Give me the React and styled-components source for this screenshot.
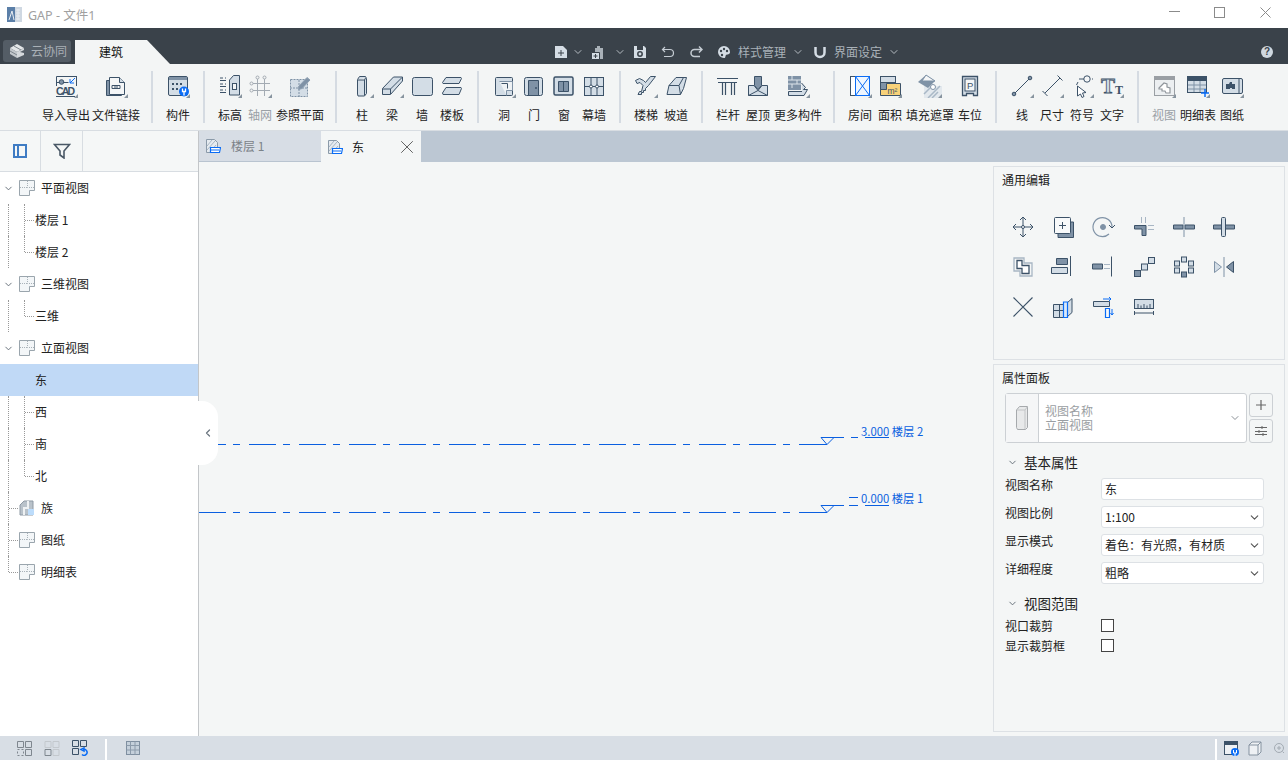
import styled, { createGlobalStyle } from 'styled-components';
import { ChevronDown, ChevronLeft, X as CloseIcon } from 'lucide-react';

const D = '#3c5268';
const M = '#7f92a6';
const L = '#d3dde6';
const B = '#0a6cf5';
const G = '#a3abb3';

const GlobalStyle = createGlobalStyle`
  * { box-sizing: border-box; }
  html, body { margin: 0; padding: 0; height: 100%; }
  body {
    background: #f4f6f6;
    color: #222;
    font-family: "Noto Sans CJK SC", "Noto Sans", sans-serif;
    font-size: 12px;
    overflow: hidden;
  }
`;

const Page = styled.div`
  width: 1288px;
  height: 760px;
  display: flex;
  flex-direction: column;
`;

const TitleBar = styled.div`
  height: 28px;
  background: #fff;
  display: flex;
  align-items: center;
  padding-left: 7px;
`;

const AppTitle = styled.span`
  margin-left: 6px;
  color: #a0a0a0;
  font-size: 12.5px;
  font-family: "Noto Sans", "Noto Sans CJK SC", sans-serif;
`;

const WindowButtons = styled.div`
  margin-left: auto;
  display: flex;
`;

const WindowButton = styled.div`
  width: 45.5px;
  height: 28px;
  display: flex;
  align-items: center;
  justify-content: center;
  margin-top: -4px;
`;

const DarkBar = styled.div`
  height: 36px;
  background: #3a424a;
  display: flex;
  align-items: flex-end;
  padding-left: 3px;
`;

const CloudButton = styled.div`
  width: 68px;
  height: 22px;
  margin-bottom: 2px;
  background: #545d66;
  border-radius: 3px;
  color: #a9b0b6;
  display: flex;
  align-items: center;
  gap: 6px;
  padding-left: 6px;
  line-height: 22px;
`;

const RibbonTab = styled.div`
  width: 95px;
  height: 24px;
  margin-left: 4px;
  padding-left: 24px;
  background: #f3f5f5;
  clip-path: polygon(0 0, 72px 0, 100% 100%, 0 100%);
  line-height: 24px;
  color: #111;
`;

const QuickBar = styled.div`
  margin-left: 384px;
  height: 24px;
  display: flex;
  align-items: center;
  color: #a9b1b8;
`;

const QuickLabel = styled.span`
  margin-left: ${(p) => p.$left}px;
  line-height: 24px;
`;

const QuickIcon = styled.svg`
  margin-left: ${(p) => p.$left || 0}px;
  flex: none;
  display: block;
`;

const QuickChevron = styled(ChevronDown)`
  margin-left: ${(p) => p.$left}px;
  flex: none;
  color: #b4bbc1;
`;

const Help = styled.div`
  margin-left: auto;
  margin-right: 15px;
  margin-bottom: 6px;
  width: 12px;
  height: 12px;
  border-radius: 50%;
  background: #cfd8e0;
  color: #3a424a;
  font: bold 10px/12px "Liberation Sans", sans-serif;
  text-align: center;
`;

const Ribbon = styled.div`
  height: 67px;
  background: #f3f5f5;
  border-bottom: 1px solid #d8dde2;
  display: flex;
  align-items: flex-start;
  padding-left: 29px;
`;

const RibbonGroup = styled.div`
  display: flex;
  padding: 0 10px 0 ${(p) => p.$left}px;
`;

const RibbonSep = styled.div`
  width: 2px;
  height: 52px;
  margin-top: 7px;
  background: #d5dbe2;
  flex: none;
`;

const ToolItem = styled.div`
  width: ${(p) => p.$w}px;
  display: flex;
  flex-direction: column;
  align-items: center;
  padding-top: 10px;
  color: ${(p) => (p.$dim ? '#9aa0a6' : '#222')};
`;

const ToolIcon = styled.svg`
  display: block;
  width: 24px;
  height: 24px;
`;

const ToolLabel = styled.span`
  margin-top: 9px;
  line-height: 16px;
  white-space: nowrap;
`;

const Body = styled.div`
  flex: 1;
  display: flex;
  min-height: 0;
`;

const Sidebar = styled.aside`
  width: 199px;
  flex: none;
  background: #fff;
  border-right: 1px solid #c3c6c9;
  position: relative;
  display: flex;
  flex-direction: column;
`;

const SideHeader = styled.div`
  height: 41px;
  background: #f5f7f7;
  border-bottom: 1px solid #d8dde2;
  display: flex;
`;

const SideTool = styled.div`
  width: ${(p) => p.$w}px;
  border-right: 1px solid #d8dde2;
  display: flex;
  align-items: center;
  justify-content: center;
`;

const TreeRow = styled.div`
  height: 32px;
  position: relative;
  display: flex;
  align-items: center;
  padding-left: ${(p) => (p.$child ? 35 : 19)}px;
  gap: 6px;
  background: ${(p) => (p.$active ? '#c0d9f6' : 'transparent')};
  color: #222;
  line-height: 32px;
`;

const Twist = styled(ChevronDown)`
  position: absolute;
  left: 3px;
  top: 11px;
  color: #5f6973;
`;

const Trunk = styled.span`
  position: absolute;
  left: 8px;
  top: 0;
  bottom: 0;
  border-left: 1px dotted #999;
`;

const Branch = styled.span`
  position: absolute;
  left: ${(p) => p.$x}px;
  top: 0;
  bottom: ${(p) => (p.$last ? '50%' : '0')};
  border-left: 1px dotted #999;
  &::after {
    content: '';
    position: absolute;
    left: 0;
    top: ${(p) => (p.$last ? '100%' : '50%')};
    width: ${(p) => p.$w}px;
    border-top: 1px dotted #999;
  }
`;

const CollapseHandle = styled.div`
  position: absolute;
  left: 198px;
  top: 270px;
  width: 20px;
  height: 64px;
  background: #fff;
  border-radius: 0 16px 16px 0;
  display: flex;
  align-items: center;
  justify-content: center;
  color: #6c7680;
  z-index: 2;
`;

const Main = styled.main`
  flex: 1;
  min-width: 0;
  display: flex;
  flex-direction: column;
`;

const TabBar = styled.div`
  height: 31px;
  background: #bcc7d3;
  display: flex;
  flex: none;
`;

const ViewTab = styled.div`
  width: ${(p) => p.$w}px;
  background: ${(p) => (p.$active ? '#f4f6f6' : '#d7dde5')};
  border-bottom: ${(p) => (p.$active ? 'none' : '1px solid #b9c4d0')};
  color: ${(p) => (p.$active ? '#222' : '#7b8288')};
  display: flex;
  align-items: center;
  padding-left: 6px;
  line-height: 30px;
`;

const ViewTabName = styled.span`
  margin-left: ${(p) => p.$left}px;
`;

const TabClose = styled(CloseIcon)`
  margin-left: auto;
  margin-right: 3px;
  color: #555;
`;

const Workspace = styled.div`
  flex: 1;
  display: flex;
  min-height: 0;
  background: #f4f6f6;
`;

const Canvas = styled.div`
  flex: 1;
  min-width: 0;
`;

const CanvasSvg = styled.svg`
  display: block;
  width: 100%;
  height: 100%;
`;

const RightColumn = styled.div`
  width: 295px;
  flex: none;
  padding: 4px 3px 4px 0;
  display: flex;
  flex-direction: column;
  gap: 4px;
`;

const Panel = styled.section`
  border: 1px solid #dde1e5;
  background: #f4f6f6;
  padding: 4px 8px;
  ${(p) => (p.$fill ? 'flex: 1;' : `height: ${p.$h}px;`)}
`;

const PanelTitle = styled.div`
  line-height: 18px;
  color: #222;
`;

const EditGrid = styled.div`
  display: grid;
  grid-template-columns: repeat(6, 40.2px);
  grid-auto-rows: 40px;
  margin: 18px 0 0 1px;
`;

const EditCell = styled.div`
  display: flex;
  align-items: center;
  justify-content: center;
`;

const TypeRow = styled.div`
  display: flex;
  gap: 2px;
  margin: 6px 0 0 3px;
`;

const TypeBox = styled.div`
  width: 242px;
  height: 50px;
  background: #fff;
  border: 1px solid #ccd0d4;
  border-radius: 3px;
  display: flex;
  align-items: center;
`;

const TypeThumb = styled.div`
  width: 33px;
  height: 100%;
  background: #f5f6f7;
  border-right: 1px solid #ccd0d4;
  display: flex;
  align-items: center;
  justify-content: center;
`;

const TypeText = styled.div`
  flex: 1;
  padding-left: 6px;
  color: #9a9ea2;
  line-height: 14px;
`;

const TypeChevron = styled(ChevronDown)`
  margin-right: 5px;
  color: #8b9197;
`;

const SideButtons = styled.div`
  display: flex;
  flex-direction: column;
  gap: 2px;
`;

const SquareButton = styled.div`
  width: 24px;
  height: 24px;
  border: 1px solid #ccd0d4;
  border-radius: 3px;
  display: flex;
  align-items: center;
  justify-content: center;
  color: #666;
  background: #f4f6f6;
`;

const SectionHead = styled.div`
  display: flex;
  align-items: center;
  gap: 6px;
  margin: ${(p) => p.$top}px 0 0 5px;
  font-size: 13.5px;
  line-height: 20px;
  color: #222;
`;

const SectionChevron = styled(ChevronDown)`
  color: #5f6973;
`;

const PropRows = styled.div`
  margin: 6px 0 0 3px;
  display: flex;
  flex-direction: column;
  gap: 6px;
`;

const PropRow = styled.div`
  display: flex;
  height: 22px;
`;

const PropLabel = styled.span`
  width: 96px;
  line-height: 14px;
  color: #222;
`;

const PropField = styled.div`
  width: 163px;
  height: 22px;
  padding-left: 3px;
  background: #fff;
  border: 1px solid #dde1e5;
  border-radius: 3px;
  display: flex;
  align-items: center;
  justify-content: space-between;
  line-height: 20px;
  color: #222;
`;

const FieldChevron = styled(ChevronDown)`
  margin-right: 2px;
  color: #555;
`;

const CheckRows = styled.div`
  margin: 6px 0 0 3px;
  display: flex;
  flex-direction: column;
  gap: 7px;
`;

const CheckRow = styled.div`
  display: flex;
  align-items: center;
  height: 13px;
  line-height: 13px;
`;

const CheckBox = styled.span`
  width: 13px;
  height: 13px;
  background: #fff;
  border: 1px solid #444;
`;

const StatusBar = styled.footer`
  height: 24px;
  flex: none;
  background: #d8dee5;
  display: flex;
  align-items: center;
`;

const StatusGroup = styled.div`
  display: flex;
  align-items: center;
  gap: ${(p) => p.$gap || 12}px;
  padding: 0 ${(p) => p.$right}px 0 ${(p) => p.$left}px;
`;

const StatusSep = styled.div`
  width: 2px;
  align-self: flex-end;
  height: 21px;
  background: #fff;
  margin-left: ${(p) => (p.$auto ? 'auto' : 0)};
`;

const mark = <path d="M24 20v4h-4z" fill="#87949f" />;

const icons = {
  cad: (
    <>
      <path d="M2.500 12V2.500H23M2.500 8.500h12M22.500 2.500V12" fill="none" stroke={D} />
      <circle cx="7.500" cy="8" r="2.300" fill={M} stroke={D} />
      <path d="M21 4l-5 5m0-4v4h4" fill="none" stroke={B} />
      <text x="2" y="21" fontSize="10.500" fontWeight="700" fontFamily="Liberation Sans" fill={D} textLength="19">CAD</text>
      <path d="M2 22.500h19" stroke={D} />
    </>
  ),
  file: (
    <>
      <path d="M5.500 6.500h-3v15h15v-1" fill={M} stroke={D} />
      <path d="M5.500 3.500h10l5 5v12h-15z" fill="#f4f6f7" stroke={D} />
      <path d="M15.500 3.500v5h5" fill={L} stroke={D} />
      <path d="M8 11.500h8v3H8z" fill="none" stroke={D} />
      <path d="M10 13h4" stroke={D} />
    </>
  ),
  part: (
    <>
      <rect x="2.500" y="2.500" width="19" height="19" rx="1.500" fill={L} stroke={D} />
      <path d="M3 3h18v3H3z" fill={M} />
      <path d="M6 9h2v2H6zm4 0h2v2h-2zm4 0h2v2h-2zM6 14h2v2H6zm4 0h2v2h-2z" fill={D} />
      <circle cx="18" cy="17.500" r="5" fill={B} />
      <path d="M16.500 14.500v3h3v-3m-1.500 3v4" stroke="#fff" fill="none" strokeWidth="1.300" />
    </>
  ),
  level: (
    <>
      <path d="M2 4h3m2 0h1M2 6.500h6M2 10h3m2 0h1M2 12.500h6M2 16h3m2 0h1M2 18.500h6" stroke={D} />
      <path d="M11.500 6l4-4.500h6V21h-10z" fill={L} stroke={D} />
      <rect x="14.500" y="9.500" width="4" height="6" fill="#f4f6f7" stroke={D} />
    </>
  ),
  axis: (
    <g stroke={G} fill="none">
      <path d="M9.500 5v17M16.500 5v17M5 9.500h17M5 16.500h17" />
      <circle cx="9.500" cy="3.500" r="1.500" />
      <circle cx="16.500" cy="3.500" r="1.500" />
      <circle cx="3.500" cy="9.500" r="1.500" />
      <circle cx="3.500" cy="16.500" r="1.500" />
    </g>
  ),
  plane: (
    <>
      <rect x="2.500" y="5.500" width="17" height="17" fill={L} stroke={M} strokeDasharray="2 1" />
      <path d="M2 14h18M11 6v17" stroke={M} strokeDasharray="2 1" />
      <path d="M11 12l8-8.500 3 2.500-8 8.500-3.500 1z" fill={M} stroke="#8ea0b2" />
    </>
  ),
  column: (
    <path d="M7.500 5.500l2-3h6l1 2v15l-2 2.500h-6.500l-.5-2zM8 6h6.500l1-2M14.500 6v15.500" fill={L} stroke={D} />
  ),
  beam: (
    <>
      <path d="M2.500 14.500l11-11.500h9v4l-12 13.500h-8z" fill={L} stroke={D} />
      <path d="M2.500 15h8l11.500-11.500M10.500 15v5" fill="none" stroke={D} />
    </>
  ),
  wall: <rect x="2.500" y="3.500" width="20" height="18" rx="2" fill={L} stroke={D} />,
  slab: (
    <>
      <path d="M6 3.500h15l.5 1-2.500 5H3l-.5-1z" fill={L} stroke={D} />
      <path d="M6 13.500h15l.5 1-2.500 6H3l-.5-1.500z" fill={L} stroke={D} />
    </>
  ),
  hole: (
    <>
      <rect x="3.500" y="3.500" width="17" height="18" rx="1" fill={L} stroke={D} />
      <path d="M7.500 7.500h13v9h-6v5" fill="#eef2f5" stroke={M} />
      <path d="M9.500 9.500h6v5" fill="none" stroke={D} />
    </>
  ),
  door: (
    <>
      <rect x="2.500" y="3.500" width="18" height="18" rx="2" fill={L} stroke={D} />
      <path d="M6.500 6.500h10v15h-10z" fill={M} stroke={D} />
      <circle cx="14" cy="14" r="1" fill={D} />
    </>
  ),
  window: (
    <>
      <rect x="2" y="3" width="19" height="18" rx="1.500" fill={L} stroke={D} strokeWidth="1.500" />
      <path d="M6.500 7.500h10v10h-10z" fill={M} stroke={D} />
      <path d="M11.500 7v11" stroke={D} />
    </>
  ),
  curtain: (
    <>
      <rect x="2.500" y="3.500" width="19" height="18" fill={L} stroke={D} />
      <path d="M9 3.500v18M15 3.500v18M2.500 12.500h19" stroke={D} />
      <circle cx="9" cy="12.500" r="1.500" fill="#fff" stroke={D} />
      <circle cx="15" cy="12.500" r="1.500" fill="#fff" stroke={D} />
    </>
  ),
  stair: (
    <path d="M1.500 6.500l4-2 4 2 2 2 5-6h5l-7 9-3 3v2h-2v2h-2v2H4l1.500-3h2l1.500-6-3-3-3 1z" fill={L} stroke={D} />
  ),
  ramp: (
    <>
      <path d="M3 20.500l2-9 7-8h10.500l-3 11-3 6z" fill={L} stroke={D} />
      <path d="M5 11.500h10l4.500-8M15 11.500l1.500 9" fill="none" stroke={D} />
    </>
  ),
  rail: (
    <path d="M1 4.500h21M2 8.500h19M6.500 8.500V21M9.500 8.500V21M15.500 8.500V21M18.500 8.500V21" fill="none" stroke={D} strokeWidth="1.200" />
  ),
  roof: (
    <>
      <path d="M2.500 21.500v-10h5.500l4 5 4-5h5.500v10z" fill={L} stroke={D} />
      <path d="M2.500 21.500l9.500-5 9.500 5" fill="none" stroke={D} />
      <path d="M8.500 2.500h7v9l-3.500 4-3.500-4z" fill={M} stroke={D} />
    </>
  ),
  more: (
    <>
      <path d="M2 2h13v14H2z" fill={M} />
      <path d="M2 6h13M2 10h13M6 2v4M11 6v4M6 10v4" stroke="#dde4ea" />
      <path d="M15.500 9l4 4.500-2 2h4L18 21.500H2.500v-4h13.500" fill={L} stroke={D} />
    </>
  ),
  room: (
    <>
      <rect x="2.500" y="2.500" width="5" height="19" fill="#fff" stroke={D} />
      <rect x="7.500" y="2.500" width="14" height="19" fill="#eef6ff" stroke={B} />
      <path d="M7.500 2.500l14 19m0-19l-14 19" stroke={B} />
    </>
  ),
  area: (
    <>
      <rect x="2.500" y="2.500" width="15" height="13" fill={M} stroke={D} />
      <rect x="2.500" y="2.500" width="15" height="6" fill={L} stroke={D} />
      <path d="M2.500 15.500h6v-6h14v12h-20z" fill="#f8d27a" stroke={D} />
      <text x="9.500" y="20" fontSize="8.500" fontFamily="Liberation Sans" fill={D}>m²</text>
    </>
  ),
  hatch: (
    <>
      <path d="M6 12h18v12H6z" fill="#e2e8ed" />
      <path d="M6 20l8-8m-4 12l12-12m-8 12l6-6" stroke="#a9b8c6" strokeWidth="1.500" />
      <path d="M0 8l8-7 9 6-7 7z" fill={M} />
      <path d="M8 1l9 6H4z" fill="#f4f6f7" stroke={M} />
      <circle cx="15" cy="13" r="2.500" fill="#fff" stroke={M} />
    </>
  ),
  parking: (
    <>
      <path d="M4.500 2.500h15v19h-4v-2h-7v2h-4z" fill={L} stroke={D} strokeWidth="1.300" />
      <rect x="7" y="5" width="10" height="12" fill="#f4f6f7" stroke={D} />
      <text x="9" y="14.500" fontSize="9.500" fontFamily="Liberation Sans" fill={D}>P</text>
    </>
  ),
  line: (
    <>
      <path d="M4 20L20 4" stroke={D} />
      <circle cx="4" cy="20" r="1.800" fill={M} stroke={D} />
      <circle cx="20" cy="4" r="1.800" fill={M} stroke={D} />
    </>
  ),
  dim: <path d="M5 19L20 4M2.500 17l5 5M17.500 1.500l5 5" fill="none" stroke={D} />,
  symbol: (
    <>
      <circle cx="17" cy="5" r="3.200" fill="#f4f6f7" stroke={D} />
      <path d="M14 5H9M22 5h1M8 8L6.500 11" stroke={D} />
      <path d="M7.500 12l8.500 6.500-3.500.5 1.500 3.500-2 1-1.500-3.500-3 2z" fill="#fff" stroke={D} />
    </>
  ),
  text: (
    <>
      <text x="1" y="19" fontSize="21" fontWeight="700" fontFamily="Liberation Serif" fill={L} stroke={D} strokeWidth=".8">T</text>
      <text x="15" y="20" fontSize="12" fontWeight="700" fontFamily="Liberation Serif" fill={D}>T</text>
    </>
  ),
  view: (
    <>
      <rect x="2.500" y="2.500" width="20" height="19" fill="#eceff1" stroke="#9a9fa4" />
      <path d="M3 3h19v3H3z" fill="#9a9fa4" />
      <path d="M7 14l5-5 3 1v3l3 1v5h-4l-1-2h-3v-2H7z" fill="#fff" stroke="#8f959b" strokeWidth="1.200" />
    </>
  ),
  schedule: (
    <>
      <rect x="1.500" y="2.500" width="19" height="16" fill={L} stroke={D} />
      <path d="M2 3h18v4H2z" fill={D} />
      <path d="M2 11h18M2 15h18M8 7v11M14 7v11" stroke={M} />
      <path d="M19 15v8M15 19h8" stroke={B} strokeWidth="1.500" />
    </>
  ),
  sheet: (
    <>
      <rect x="2.500" y="4.500" width="20" height="15" rx="1.500" fill={L} stroke={D} />
      <path d="M19 4.500v15" stroke={D} />
      <path d="M6 10h3l1-2h2v2h3v5h-3v-1h-2v1H6z" fill="#3c5268" />
    </>
  ),
};

const ribbonGroups = [
  { left: 12, items: [['导入导出', 'cad', 50, true], ['文件链接', 'file', 50, true]] },
  { left: 10, items: [['构件', 'part', 30, true]] },
  { left: 10, items: [['标高', 'level', 30, true], ['轴网', 'axis', 30, true, true], ['参照平面', 'plane', 50]] },
  { left: 10, items: [['柱', 'column', 30, true], ['梁', 'beam', 30, true], ['墙', 'wall', 30], ['楼板', 'slab', 30]] },
  { left: 10, items: [['洞', 'hole', 30, true], ['门', 'door', 30], ['窗', 'window', 30], ['幕墙', 'curtain', 30]] },
  { left: 10, items: [['楼梯', 'stair', 30, true], ['坡道', 'ramp', 30]] },
  { left: 10, items: [['栏杆', 'rail', 30], ['屋顶', 'roof', 30], ['更多构件', 'more', 50, true]] },
  { left: 10, items: [['房间', 'room', 30, true], ['面积', 'area', 30, true], ['填充遮罩', 'hatch', 50, true], ['车位', 'parking', 30]] },
  { left: 10, items: [['线', 'line', 30, true], ['尺寸', 'dim', 30, true], ['符号', 'symbol', 30, true], ['文字', 'text', 30, true]] },
  { left: 10, items: [['视图', 'view', 30, true, true], ['明细表', 'schedule', 38, true], ['图纸', 'sheet', 30, true]] },
];

const editIcons = [
  <g fill="none" stroke={D}>
    <path d="M2 12h20M12 2v20M5 9l-3 3 3 3M19 9l3 3-3 3M9 5l3-3 3 3M9 19l3 3 3-3" />
    <circle cx="12" cy="12" r="1.500" fill="#fff" />
  </g>,
  <>
    <path d="M7 21.500V7h15.500v15.500H7z" fill={M} stroke={D} />
    <rect x="3.500" y="2.500" width="16" height="16" rx="1" fill="#f7f9fa" stroke={D} />
    <path d="M11.500 7v7M8 10.500h7" stroke={D} />
  </>,
  <g fill="none" stroke={M}>
    <path d="M21 12a9.500 9.500 0 1 0-3 7" strokeWidth="1.200" />
    <circle cx="12" cy="12" r="2.500" fill={M} />
    <path d="M18 10l3 3 3-3" stroke={D} />
  </g>,
  <>
    <path d="M2.500 10.500h11.500v10h-4v-6.500H2.500z" fill={M} stroke={D} />
    <path d="M9.500 2v6M13.500 2v6M16 10.500h6M16 14.500h6" stroke="#a8b6c4" />
  </>,
  <>
    <path d="M1.500 10h9.500v4H1.500zM13 10h9.500v4H13z" fill={M} stroke={D} />
    <path d="M12 2v20" stroke={M} />
  </>,
  <>
    <path d="M1.500 10h21v4h-21z" fill={M} stroke={D} />
    <rect x="9.500" y="2.500" width="4" height="19" rx="1" fill={L} stroke={D} />
  </>,
  <>
    <path d="M3 3h10v5h8v13H9v-5H3z" fill="none" stroke="#a8b6c4" strokeWidth="1.300" />
    <path d="M6 5.500h5v5h7v8h-7v-5H6z" fill="#fff" stroke={D} strokeWidth="1.300" />
  </>,
  <>
    <path d="M5.500 3.500h11v6h-11z" fill={M} stroke={D} />
    <path d="M.5 12.500h16v6H.5z" fill={L} stroke={D} />
    <path d="M19.500 1v20" stroke={D} />
  </>,
  <>
    <path d="M1.500 9h10v5h-10z" fill={M} stroke={D} />
    <path d="M13 9.500h6M13 13.500h6" stroke="#a8b6c4" />
    <path d="M20.500 1.500v20" stroke={D} />
  </>,
  <>
    <rect x="2.500" y="15.500" width="6" height="6" fill={M} stroke={D} />
    <rect x="9.500" y="9" width="6" height="6" fill={L} stroke={D} />
    <rect x="16.500" y="2.500" width="6" height="6" fill={L} stroke={D} />
  </>,
  <>
    <rect x="9.500" y="2" width="5" height="5" fill={L} stroke={D} />
    <rect x="2.500" y="6" width="5" height="5" fill={L} stroke={D} />
    <rect x="16.500" y="6" width="5" height="5" fill={L} stroke={D} />
    <rect x="2.500" y="13" width="5" height="5" fill={L} stroke={D} />
    <rect x="16.500" y="13" width="5" height="5" fill={L} stroke={D} />
    <rect x="9.500" y="17" width="5" height="5" fill={M} stroke={D} />
  </>,
  <>
    <path d="M2.500 6.500l7 5.500-7 5.500z" fill={L} stroke={M} />
    <path d="M12 2v20" stroke={M} />
    <path d="M21.500 6.500l-7 5.500 7 5.500z" fill={M} stroke={D} />
  </>,
  <path d="M2.500 2.500l19 19M21.500 2.500l-19 19" stroke={D} strokeWidth="1.100" />,
  <>
    <path d="M16 8l5-4.500v14L16 22z" fill={L} stroke={D} />
    <path d="M2.500 9.500h14v13h-14z" fill={L} stroke={D} />
    <path d="M2.500 15.500h14M8.500 9.500v13" stroke={D} />
    <path d="M12.500 7h4v15.500h-4z" fill="#d9e9fb" stroke={B} strokeWidth="1.200" />
  </>,
  <>
    <path d="M2.500 6.500h16v5h-16z" fill={L} stroke={D} />
    <path d="M12 4h8m-2-2l2 2-2 2" fill="none" stroke={B} />
    <path d="M14.500 13.500h4v9h-4z" fill="#f7f9fa" stroke={B} strokeWidth="1.200" />
    <path d="M21 14v6m-1.500-2l1.500 2 1.500-2" fill="none" stroke={B} />
  </>,
  <>
    <rect x="2.500" y="4.500" width="19" height="9" fill={L} stroke={D} />
    <path d="M6 9v4.500M9 10.500v3M12 9v4.500M15 10.500v3M18 9v4.500" stroke={D} />
    <path d="M2.500 16v4M21.500 16v4M2.500 18h19" stroke={D} />
  </>,
];

function PageIcon() {
  return (
    <svg width="16" height="16" viewBox="0 0 16 16">
      <path d="M.5.5h15v10h-5v5H.5z" fill="#f3f6f8" stroke="#9aa5ad" />
      <path d="M8.500 1v6.500H15M1 7.500h7" fill="none" stroke="#a9b2b9" strokeDasharray="1 1" />
    </svg>
  );
}

function FamilyIcon() {
  return (
    <svg width="16" height="16" viewBox="0 0 16 16">
      <path d="M1 15V5l4-4h9v14z" fill="#b9c2ca" stroke="#8f9aa5" />
      <path d="M5 15V8h4V1" fill="none" stroke="#eef1f3" strokeWidth="2" />
      <rect x="9" y="9" width="6" height="6" fill="#bcdcfb" />
    </svg>
  );
}

function TabDocIcon() {
  return (
    <svg width="16" height="16" viewBox="0 0 16 16">
      <path d="M1.500 1.500h8l3 3v10h-11z" fill="#e6ebf0" stroke="#8b9aa9" />
      <path d="M2 8l5-6M2 12l8-9M5 14l6-7" stroke="#a9b6c3" />
      <path d="M5.500 9.500h10l-1 5h-9z" fill="#fff" stroke={B} strokeWidth="1.200" />
      <path d="M5 12h9" stroke={B} />
    </svg>
  );
}

function LevelMark({ y, textY, value, name, dashes }) {
  return (
    <g>
      <path
        d={`M199 ${y}H821`}
        stroke="#0a5fe0"
        strokeWidth="1"
        strokeDasharray="27 7 7 9"
      />
      <path
        d={`M821 ${y - 7}H844M821 ${y - 7}L827 ${y}L834 ${y - 7}M827 ${y}H821`}
        stroke="#0a5fe0"
        fill="none"
      />
      <path d={dashes} stroke="#0a5fe0" />
      <path d={`M865 ${y - 7}H889`} stroke="#0a5fe0" />
      <text x="861" y={textY} fontSize="11.300" fill="#0a5fe0" fontFamily="Noto Sans CJK SC, sans-serif">
        {value} {name}
      </text>
    </g>
  );
}

const treeRows = [
  { label: '平面视图', head: true },
  { label: '楼层 1', child: true },
  { label: '楼层 2', child: true, last: true },
  { label: '三维视图', head: true },
  { label: '三维', child: true, last: true },
  { label: '立面视图', head: true },
  { label: '东', child: true, active: true },
  { label: '西', child: true },
  { label: '南', child: true },
  { label: '北', child: true, last: true },
  { label: '族', leaf: true, family: true },
  { label: '图纸', leaf: true },
  { label: '明细表', leaf: true, last: true },
];

function TreeItem({ row }) {
  return (
    <TreeRow $child={row.child} $active={row.active}>
      {row.head && <Twist size={11} strokeWidth={2} />}
      {row.child && !row.active && <Trunk />}
      {row.child && !row.active && <Branch $x={24} $w={9} $last={row.last} />}
      {row.leaf && <Branch $x={8} $w={9} $last={row.last} />}
      {!row.child && (row.family ? <FamilyIcon /> : <PageIcon />)}
      <span>{row.label}</span>
    </TreeRow>
  );
}

function RibbonSection({ group, withSep }) {
  return (
    <>
      <RibbonGroup $left={group.left}>
        {group.items.map(([label, icon, width, hasMark, dim]) => (
          <ToolItem key={label} $w={width} $dim={dim}>
            <ToolIcon viewBox="0 0 24 24">
              {icons[icon]}
              {hasMark && mark}
            </ToolIcon>
            <ToolLabel>{label}</ToolLabel>
          </ToolItem>
        ))}
      </RibbonGroup>
      {withSep && <RibbonSep />}
    </>
  );
}

const props = [
  { label: '视图名称', value: '东' },
  { label: '视图比例', value: '1:100', select: true },
  { label: '显示模式', value: '着色：有光照，有材质', select: true },
  { label: '详细程度', value: '粗略', select: true },
];

export default function App() {
  return (
    <Page>
      <GlobalStyle />
      <TitleBar>
        <svg width="15" height="15" viewBox="0 0 15 15">
          <rect width="15" height="15" fill="#cfd8e2" />
          <path d="M0 0h8v15H0z" fill="#5b7fa8" />
          <path d="M2 13l3-9 2 9M9 3h4M9 6h4M9 9h4M9 12h4M11 2v11" stroke="#e8edf2" fill="none" />
        </svg>
        <AppTitle>GAP - 文件1</AppTitle>
        <WindowButtons>
          <WindowButton>
            <svg width="11" height="2"><path d="M0 .5h11" stroke="#8b8b8b" /></svg>
          </WindowButton>
          <WindowButton>
            <svg width="11" height="11"><rect x=".5" y=".5" width="10" height="10" fill="none" stroke="#8b8b8b" /></svg>
          </WindowButton>
          <WindowButton>
            <svg width="11" height="11"><path d="M.5.5l10 10m0-10l-10 10" stroke="#8b8b8b" /></svg>
          </WindowButton>
        </WindowButtons>
      </TitleBar>

      <DarkBar>
        <CloudButton>
          <svg width="16" height="16" viewBox="0 0 16 16">
            <path d="M1 5l7-4 7 4-7 4z" fill="#e4e7e9" />
            <path d="M1 5v6l7 4V9z" fill="#c2c7cb" />
            <path d="M15 5v2l-4 2 4 1v2l-7 3V9z" fill="#d5d9dc" />
            <path d="M1 8l7 4M5 3l7 4" stroke="#7d858c" />
          </svg>
          云协同
        </CloudButton>
        <RibbonTab>建筑</RibbonTab>
        <QuickBar>
          <QuickIcon width="14" height="14" viewBox="0 0 14 14">
            <path d="M1 1h8l4 4v8H1z" fill="#d5dde5" />
            <path d="M7 5v6M4 8h6" stroke="#3a424a" />
          </QuickIcon>
          <QuickChevron $left={4} size={12} />
          <QuickIcon $left={6} width="15" height="15" viewBox="0 0 15 15">
            <path d="M5 3h2V1h3v2h3v11H5z" fill="#a9b1b8" />
            <path d="M1.500 7.500h8v7h-8z" fill="#d5dde5" stroke="#3a424a" />
            <path d="M5.500 9v4M3.500 11h4" stroke="#3a424a" />
          </QuickIcon>
          <QuickChevron $left={9} size={12} />
          <QuickIcon $left={7} width="14" height="14" viewBox="0 0 14 14">
            <path d="M1 1h10l2 2v10H1z" fill="#d5dde5" />
            <path d="M4 1h6v4H4z" fill="#3a424a" />
            <circle cx="7" cy="9" r="2.200" fill="none" stroke="#3a424a" strokeWidth="1.500" />
          </QuickIcon>
          <QuickIcon $left={14} width="14" height="14" viewBox="0 0 14 14">
            <path d="M4 2L1.500 4.500 4 7M2 4.500h7a3.500 3.500 0 0 1 0 7H3" fill="none" stroke="#c5ccd3" strokeWidth="1.200" />
          </QuickIcon>
          <QuickIcon $left={14} width="14" height="14" viewBox="0 0 14 14">
            <path d="M10 1.500L13 4.500 10 7.500M12 4.500H5.500a3.500 3.500 0 0 0 0 7H11" fill="none" stroke="#c5ccd3" strokeWidth="1.500" />
          </QuickIcon>
          <QuickIcon $left={14} width="14" height="14" viewBox="0 0 14 14">
            <path d="M7 1a6 6 0 1 0 0 12c2 0 1-2 2-3s4 0 4-3a6 6 0 0 0-6-6z" fill="#d5dde5" />
            <circle cx="4" cy="6" r="1.200" fill="#3a424a" />
            <circle cx="7" cy="4" r="1.200" fill="#3a424a" />
            <circle cx="10" cy="6" r="1.200" fill="#3a424a" />
            <circle cx="5" cy="10" r="1.200" fill="#3a424a" />
          </QuickIcon>
          <QuickLabel $left={7}>样式管理</QuickLabel>
          <QuickChevron $left={6} size={12} />
          <QuickIcon $left={9} width="14" height="14" viewBox="0 0 14 14">
            <path d="M2.500 2v5.500a4.500 4.500 0 0 0 9 0V2" fill="none" stroke="#d5dde5" strokeWidth="2.500" />
          </QuickIcon>
          <QuickLabel $left={7}>界面设定</QuickLabel>
          <QuickChevron $left={6} size={12} />
        </QuickBar>
        <Help>?</Help>
      </DarkBar>

      <Ribbon>
        {ribbonGroups.map((group, index) => (
          <RibbonSection key={group.items[0][0]} group={group} withSep={index < ribbonGroups.length - 1} />
        ))}
      </Ribbon>

      <Body>
        <Sidebar>
          <SideHeader>
            <SideTool $w={41}>
              <svg width="14" height="14" viewBox="0 0 14 14">
                <rect x="1" y="1" width="12" height="12" fill="none" stroke="#3f7cc4" strokeWidth="2" />
                <path d="M5 1v12" stroke="#3f7cc4" strokeWidth="2" />
              </svg>
            </SideTool>
            <SideTool $w={42}>
              <svg width="18" height="16" viewBox="0 0 18 16">
                <path d="M1.500 1.500h15L11 8v7L7 12V8z" fill="#f5f7f7" stroke="#4a5866" strokeWidth="1.600" />
              </svg>
            </SideTool>
          </SideHeader>
          {treeRows.map((row) => (
            <TreeItem key={row.label} row={row} />
          ))}
          <CollapseHandle>
            <ChevronLeft size={12} strokeWidth={2.500} />
          </CollapseHandle>
        </Sidebar>

        <Main>
          <TabBar>
            <ViewTab $w={122}>
              <TabDocIcon />
              <ViewTabName $left={10}>楼层 1</ViewTabName>
            </ViewTab>
            <ViewTab $w={100} $active>
              <TabDocIcon />
              <ViewTabName $left={9}>东</ViewTabName>
              <TabClose size={22} strokeWidth={1} />
            </ViewTab>
          </TabBar>
          <Workspace>
            <Canvas>
              <CanvasSvg>
                <g transform="translate(-199 -161.500)">
                  <LevelMark y={444} textY={435} value="3.000" name="楼层 2" dashes="M851 437H858" />
                  <LevelMark y={512} textY={502} value="0.000" name="楼层 1" dashes="M849 497H858M849 505H858" />
                </g>
              </CanvasSvg>
            </Canvas>
            <RightColumn>
              <Panel $h={194}>
                <PanelTitle>通用编辑</PanelTitle>
                <EditGrid>
                  {editIcons.map((icon, index) => (
                    <EditCell key={index}>
                      <svg width="24" height="24" viewBox="0 0 24 24">{icon}</svg>
                    </EditCell>
                  ))}
                </EditGrid>
              </Panel>
              <Panel $fill>
                <PanelTitle>属性面板</PanelTitle>
                <TypeRow>
                  <TypeBox>
                    <TypeThumb>
                      <svg width="14" height="26" viewBox="0 0 14 26">
                        <path d="M1.500 5l3-3.500h8v21l-2 2h-8l-1-2z" fill="#e8e9ea" stroke="#a6a9ac" />
                        <path d="M2 5h8l2.500-3.500M10 5v19" fill="none" stroke="#c2c4c6" />
                      </svg>
                    </TypeThumb>
                    <TypeText>
                      <div>视图名称</div>
                      <div>立面视图</div>
                    </TypeText>
                    <TypeChevron size={12} />
                  </TypeBox>
                  <SideButtons>
                    <SquareButton>
                      <svg width="12" height="12"><path d="M6 1v10M1 6h10" stroke="#666" strokeWidth="1.200" /></svg>
                    </SquareButton>
                    <SquareButton>
                      <svg width="12" height="12">
                        <path d="M0 2.500h12M0 6.500h12M0 9.500h12" stroke="#666" />
                        <path d="M7 1v3M4 5v3M8 8v3" stroke="#666" />
                      </svg>
                    </SquareButton>
                  </SideButtons>
                </TypeRow>
                <SectionHead $top={9}>
                  <SectionChevron size={11} strokeWidth={2} />
                  基本属性
                </SectionHead>
                <PropRows>
                  {props.map((prop) => (
                    <PropRow key={prop.label}>
                      <PropLabel>{prop.label}</PropLabel>
                      <PropField>
                        {prop.value}
                        {prop.select && <FieldChevron size={13} />}
                      </PropField>
                    </PropRow>
                  ))}
                </PropRows>
                <SectionHead $top={9}>
                  <SectionChevron size={11} strokeWidth={2} />
                  视图范围
                </SectionHead>
                <CheckRows>
                  <CheckRow>
                    <PropLabel>视口裁剪</PropLabel>
                    <CheckBox />
                  </CheckRow>
                  <CheckRow>
                    <PropLabel>显示裁剪框</PropLabel>
                    <CheckBox />
                  </CheckRow>
                </CheckRows>
              </Panel>
            </RightColumn>
          </Workspace>
        </Main>
      </Body>

      <StatusBar>
        <StatusGroup $left={17} $right={17}>
          <svg width="15" height="15" viewBox="0 0 15 15">
            <path d="M.5.5h6v6h-6zM8.500.5h6v6h-6zM8.500 8.500h6v6h-6z" fill="none" stroke="#7f878f" />
            <path d="M.5 8.500h6v6h-6z" fill="none" stroke="#7f878f" strokeDasharray="2 2" />
          </svg>
          <svg width="16" height="15" viewBox="0 0 15 15">
            <path d="M.5.5h6v6h-6zM8.500.5h6v6h-6zM8.500 8.500h6v6h-6z" fill="none" stroke="#c3c8cd" />
            <path d="M.5 8.500h6v6h-6z" fill="none" stroke="#7f878f" />
          </svg>
          <svg width="16" height="16" viewBox="0 0 16 16">
            <path d="M.5.5h6v6h-6zM8.500.5h6v6h-6zM.5 8.500h6v6h-6z" fill="none" stroke={D} />
            <path d="M9 9.500L12 8v3L9 9.500zM11 9.500a3 3 0 1 1-1 5" fill="none" stroke={B} strokeWidth="1.500" />
          </svg>
        </StatusGroup>
        <StatusSep />
        <StatusGroup $left={18} $right={16}>
          <svg width="16" height="16" viewBox="0 0 16 16">
            <rect x="1.500" y="1.500" width="13" height="13" fill="#c5d0db" stroke="#7f8fa0" />
            <path d="M1.500 5.500h13M1.500 10h13M5.500 1.500v13M10 1.500v13" stroke="#8c9bab" />
          </svg>
        </StatusGroup>
        <StatusSep $auto />
        <StatusGroup $left={7} $right={0} $gap={9}>
          <svg width="15" height="15" viewBox="0 0 15 15">
            <rect x=".5" y=".5" width="13" height="13" fill="#eef1f4" stroke={D} />
            <path d="M1 1h12v3H1z" fill={D} />
            <circle cx="11" cy="11" r="4" fill={B} />
            <path d="M9.500 9v3h3V9M11 12v3" stroke="#fff" fill="none" />
          </svg>
          <svg width="14" height="15" viewBox="0 0 14 15">
            <path d="M1 4l3-3h9v10l-3 3H1z" fill="#eef1f4" stroke="#8592a0" />
            <path d="M1 4h9v10M10 4l3-3" fill="none" stroke="#8592a0" />
          </svg>
          <svg width="17" height="12" viewBox="0 0 17 12">
            <circle cx="8" cy="6" r="4.500" fill="none" stroke="#a3abb3" />
            <path d="M6 6h4M8 4v4M11.500 9.500L13 11" stroke="#a3abb3" />
          </svg>
        </StatusGroup>
      </StatusBar>
    </Page>
  );
}
